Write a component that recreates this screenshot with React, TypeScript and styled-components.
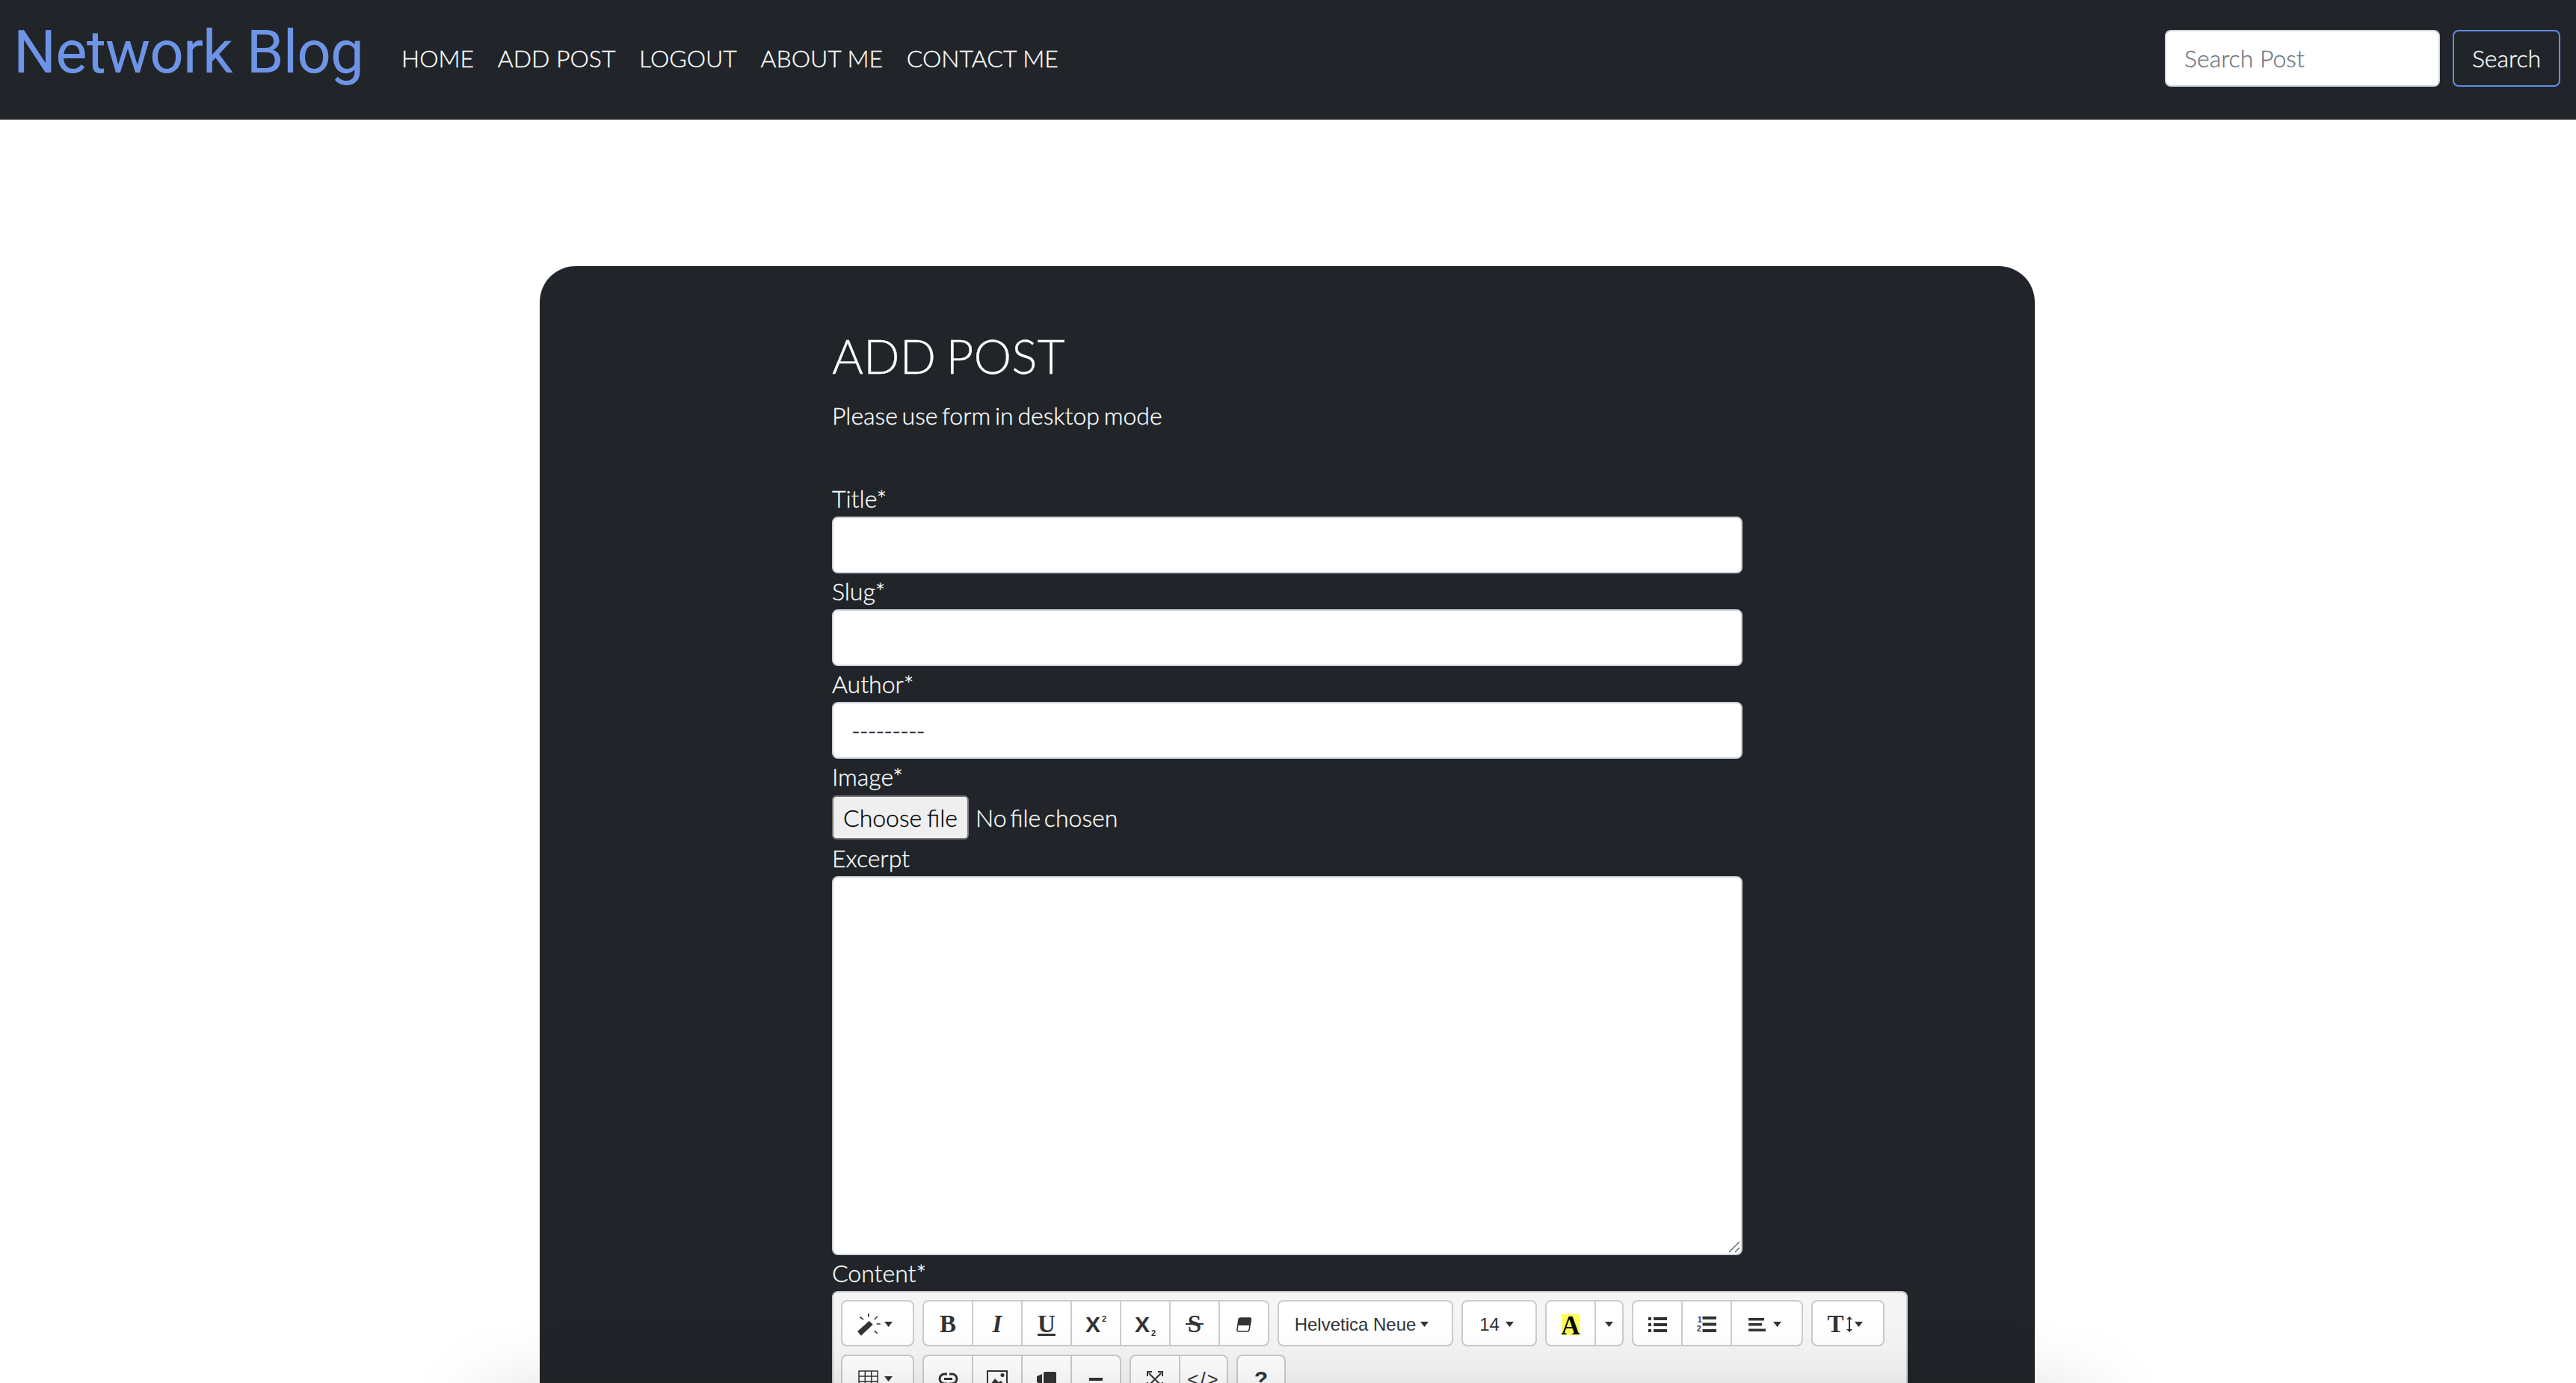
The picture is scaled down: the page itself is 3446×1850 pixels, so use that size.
import { FunctionComponent, ReactNode } from 'react';
import styled, { createGlobalStyle } from 'styled-components';

const Global = createGlobalStyle`
  html, body { margin: 0; padding: 0; background: #fff; }
  body {
    font-family: Lato, "Open Sans", sans-serif;
    font-size: 32px;
    font-weight: 300;
    line-height: 48px;
    -webkit-text-stroke: 0.3px currentColor;
  }
  * { box-sizing: border-box; }
`;

const Caret = () => (
  <svg width="11" height="7" viewBox="0 0 11 7"><path d="M0 0h11L5.500 7z" fill="#333" /></svg>
);

const Wand = () => (
  <svg width="32" height="32" viewBox="0 0 32 32" fill="#333" stroke="none">
    <path d="M1 25 16.700 11l5 4.700L6 30.700z" />
    <path
      d="M15.800 1v4.700M4.300 5.700 9 9M27.700 5l-4 4M26.700 15h5M23.700 24.300l4 3.400"
      fill="none"
      stroke="#333"
      strokeWidth="1.600"
    />
  </svg>
);

const Eraser = () => (
  <svg width="20" height="20" viewBox="0 0 20 20">
    <path d="M5 1h13q2 0 1.600 2L17 17q-.4 2-2.400 2H3q-2.500 0-2-2.500L3 3q.4-2 2-2z" fill="none" stroke="#333" strokeWidth="1.500" />
    <path d="M5 1h13q2 0 1.600 2L18 11H2.500L3 3q.4-2 2-2z" fill="#333" />
  </svg>
);

const BulletList = () => (
  <svg width="25" height="20" viewBox="0 0 25 20" fill="#333">
    <path d="M0 0h4v4H0zM0 8h4v4H0zM0 16h4v4H0zM7 0h18v4H7zM7 8h18v4H7zM7 16h18v4H7z" />
  </svg>
);

const OrderedList = () => (
  <svg width="26" height="21" viewBox="0 0 26 21" fill="#333">
    <path d="M7.500 0h18.500v4H7.500zM7.500 8.500h18.500v4H7.500zM7.500 17h18.500v4H7.500z" />
    <text x="1" y="8" fontSize="10" fontWeight="700" fontFamily="Liberation Sans">1</text>
    <text x="0" y="20" fontSize="10" fontWeight="700" fontFamily="Liberation Sans">2</text>
  </svg>
);

const AlignLines = () => (
  <svg width="23" height="18" viewBox="0 0 23 18" fill="#333">
    <path d="M0 0h21v3.500H0zM0 7h18v3.500H0zM0 14.500h23V18H0z" />
  </svg>
);

const TextHeight = () => (
  <svg width="8" height="21" viewBox="0 0 8 21" fill="#333">
    <path d="M4 0l4 4H5v13h3l-4 4-4-4h3V4H0z" />
  </svg>
);

const TableGrid = () => (
  <svg width="27" height="23" viewBox="0 0 27 23" fill="none" stroke="#333" strokeWidth="1.500">
    <path d="M1 1h25v21H1zM1 8h25M1 15h25M9.300 1v21M17.700 1v21" />
  </svg>
);

const LinkIcon = () => (
  <svg width="27" height="17" viewBox="0 0 27 17" fill="none" stroke="#333" strokeWidth="3">
    <path d="M12 2H8.500a6.500 6.500 0 0 0 0 13H12M15 2h3.500a6.500 6.500 0 0 1 0 13H15M8 8.500h11" />
  </svg>
);

const Picture = () => (
  <svg width="28" height="23" viewBox="0 0 28 23">
    <path d="M1 1h26v21H1z" fill="none" stroke="#333" strokeWidth="2" />
    <path d="M5 19l6-8 5 5 3-2 4 5z" fill="#333" />
    <circle cx="21" cy="6.500" r="2.500" fill="#333" />
  </svg>
);

const Video = () => (
  <svg width="26" height="20" viewBox="0 0 26 20" fill="#333">
    <path d="M9 2q0-2 2-2h13q2 0 2 2v16q0 2-2 2H11q-2 0-2-2zM0 6l7-3v14l-7-3z" />
  </svg>
);

const Minus = () => (
  <svg width="18" height="4" viewBox="0 0 18 4" fill="#333"><path d="M0 0h18v4H0z" /></svg>
);

const Arrows = () => (
  <svg width="22" height="22" viewBox="0 0 22 22" fill="none" stroke="#333" strokeWidth="2">
    <path d="M3 3l16 16M19 3 3 19" />
    <path d="M1 7V1h6M15 1h6v6M1 15v6h6M21 15v6h-6" />
  </svg>
);

const ToolBtn = styled.span<{ $w: number; $gap: number; $pr: number }>`
  width: ${(p) => p.$w}px;
  padding: 3px ${(p) => p.$pr}px 0 0;
  display: flex;
  align-items: center;
  justify-content: center;
  gap: ${(p) => p.$gap}px;
  color: #333;
  & + & { border-left: 2px solid #ccc; }
`;

const Group = styled.div<{ $w: number }>`
  display: flex;
  flex: none;
  width: ${(p) => p.$w}px;
  height: 62px;
  background: #fff;
  border: 2px solid #ccc;
  border-radius: 8px;
  overflow: hidden;
`;

const Glyph = styled.span<{ $italic?: boolean; $under?: boolean; $sans?: boolean }>`
  font-family: ${(p) => (p.$sans ? '"Liberation Sans", sans-serif' : '"Liberation Serif", serif')};
  font-weight: 700;
  font-size: ${(p) => (p.$sans ? 30 : 33)}px;
  line-height: 1;
  font-style: ${(p) => (p.$italic ? 'italic' : 'normal')};
  text-decoration: ${(p) => (p.$under ? 'underline' : 'none')};
  color: #333;
`;

const Struck = styled(Glyph)`
  position: relative;
  &::after {
    content: '';
    position: absolute;
    left: -3px;
    right: -3px;
    top: 15px;
    height: 2px;
    background: #333;
  }
`;

const Script = styled.span<{ $up?: boolean }>`
  position: relative;
  top: ${(p) => (p.$up ? -7 : 12)}px;
  margin-left: -2px;
  font-family: "Liberation Sans", sans-serif;
  font-weight: 700;
  font-size: 11px;
  line-height: 1;
  color: #333;
`;

const Menu = styled.span`
  font-family: "Liberation Sans", Arial, sans-serif;
  font-size: 24px;
  font-weight: 400;
  line-height: 1;
  color: #333;
`;

const CodeMark = styled(Menu)`
  font-size: 26px;
  letter-spacing: 2px;
`;

const Highlight = styled.span`
  font-family: "Liberation Serif", serif;
  font-weight: 700;
  font-size: 35px;
  line-height: 32px;
  width: 24px;
  height: 28px;
  display: flex;
  justify-content: center;
  background: #ff5;
  color: #000;
`;

const Toolbar = styled.div`
  display: flex;
  flex-direction: column;
  gap: 11px;
  width: 1439px;
  height: 260px;
  padding: 10px 10px 0;
  background: #f5f5f5;
  border: 2px solid #ccc;
  border-bottom: 0;
  border-radius: 8px 8px 0 0;
  -webkit-text-stroke: 0;
`;

const ToolRow = styled.div`
  display: flex;
  gap: 11px;
`;

const Page = styled.div`
  position: relative;
  height: 1850px;
  overflow: hidden;
`;

// soft shadow that rises from below the fold, over the card and the white page
const FoldShadow = styled.div`
  position: absolute;
  left: 650px;
  right: 650px;
  top: 1880px;
  height: 200px;
  box-shadow: 0 0 120px rgba(0, 0, 0, 0.2);
  pointer-events: none;
`;

const Navbar = styled.nav`
  height: 160px;
  display: flex;
  align-items: center;
  padding: 0 21px 0 18px;
  background: #212529;
`;

const Brand = styled.a`
  flex: none;
  width: 485px;
  margin: -20px 34px 0 0;
  font-family: Roboto, sans-serif;
  font-weight: 400;
  font-size: 80px;
  letter-spacing: -0.9px;
  line-height: 1;
  white-space: nowrap;
  color: #6d94e6;
  -webkit-text-stroke: 0;
`;

const NavLinks = styled.div`
  display: flex;
  gap: 31.6px;
  flex: 1;
  margin-top: -4px;
`;

const NavLink = styled.a`
  color: #fff;
  font-size: 32px;
`;

const SearchForm = styled.form`
  display: flex;
  gap: 17px;
  margin-top: -4px;
`;

const SearchInput = styled.div`
  width: 368px;
  height: 76px;
  padding: 0 24px;
  line-height: 72px;
  background: #fff;
  border: 2px solid #ced4da;
  border-radius: 8px;
  color: #6c757d;
`;

const SearchButton = styled.button`
  width: 144px;
  height: 76px;
  background: transparent;
  border: 2px solid #5f8ee6;
  border-radius: 8px;
  color: #fff;
  font: inherit;
`;

const Card = styled.main`
  width: 2000px;
  margin: 196px 0 0 722px;
  padding: 81px 391px 0;
  height: 1600px;
  background: #212529;
  border-radius: 48px;
  color: #fff;
`;

const Title = styled.h2`
  margin: 0 0 18px;
  font-size: 64px;
  font-weight: 300;
  line-height: 77px;
  word-spacing: -4px;
`;

const Intro = styled.p`
  margin: 0 0 63px;
  word-spacing: -3px;
`;

const Label = styled.label`
  display: block;
  height: 48px;
`;

const Field = styled.div<{ $h?: number }>`
  width: 1218px;
  height: ${(p) => p.$h || 76}px;
  padding: 0 24px;
  line-height: 72px;
  background: #fff;
  border: 2px solid #ced4da;
  border-radius: 8px;
  color: #212529;
  letter-spacing: -1px;
  position: relative;
`;

const ResizeGrip = styled.svg`
  position: absolute;
  right: 1px;
  bottom: 1px;
`;

const FileRow = styled.div`
  display: flex;
  align-items: center;
  gap: 9px;
  height: 61px;
  word-spacing: -4px;
`;

const FileButton = styled.span`
  width: 183px;
  height: 59px;
  display: flex;
  align-items: center;
  justify-content: center;
  background: #efefef;
  border: 2px solid #767676;
  border-radius: 6px;
  color: #000;
  word-spacing: -2px;
`;

const Tool: FunctionComponent<{ w: number; gap?: number; pr?: number; children: ReactNode }> = ({
  w,
  gap = 4,
  pr = 0,
  children,
}) => (
  <ToolBtn $w={w} $gap={gap} $pr={pr}>{children}</ToolBtn>
);

const App = () => (
  <Page>
    <Global />
    <Navbar>
      <Brand>Network Blog</Brand>
      <NavLinks>
        <NavLink>HOME</NavLink>
        <NavLink>ADD POST</NavLink>
        <NavLink>LOGOUT</NavLink>
        <NavLink>ABOUT ME</NavLink>
        <NavLink>CONTACT ME</NavLink>
      </NavLinks>
      <SearchForm>
        <SearchInput>Search Post</SearchInput>
        <SearchButton type="button">Search</SearchButton>
      </SearchForm>
    </Navbar>
    <Card>
      <Title>ADD POST</Title>
      <Intro>Please use form in desktop mode</Intro>
      <Label>Title*</Label>
      <Field />
      <Label>Slug*</Label>
      <Field />
      <Label>Author*</Label>
      <Field>---------</Field>
      <Label>Image*</Label>
      <FileRow>
        <FileButton>Choose file</FileButton>
        No file chosen
      </FileRow>
      <Label>Excerpt</Label>
      <Field $h={507}>
        <ResizeGrip width="16" height="16" viewBox="0 0 16 16" fill="none" stroke="#555" strokeWidth="1.200">
          <path d="M1 15 15 1M9 15l6-6" />
        </ResizeGrip>
      </Field>
      <Label>Content*</Label>
      <Toolbar>
        <ToolRow>
          <Group $w={98}>
            <Tool w={94} gap={5} pr={8}><Wand /><Caret /></Tool>
          </Group>
          <Group $w={464}>
            <Tool w={64}><Glyph>B</Glyph></Tool>
            <Tool w={66}><Glyph $italic>I</Glyph></Tool>
            <Tool w={66}><Glyph $under>U</Glyph></Tool>
            <Tool w={66}><Glyph $sans>X</Glyph><Script $up>2</Script></Tool>
            <Tool w={66}><Glyph $sans>X</Glyph><Script>2</Script></Tool>
            <Tool w={66}><Struck>S</Struck></Tool>
            <Tool w={66}><Eraser /></Tool>
          </Group>
          <Group $w={235}>
            <Tool w={231} gap={6} pr={10}><Menu>Helvetica Neue</Menu><Caret /></Tool>
          </Group>
          <Group $w={101}>
            <Tool w={97} gap={8} pr={7}><Menu>14</Menu><Caret /></Tool>
          </Group>
          <Group $w={105}>
            <Tool w={64}><Highlight>A</Highlight></Tool>
            <Tool w={37}><Caret /></Tool>
          </Group>
          <Group $w={229}>
            <Tool w={64}><BulletList /></Tool>
            <Tool w={66}><OrderedList /></Tool>
            <Tool w={95} gap={10} pr={6}><AlignLines /><Caret /></Tool>
          </Group>
          <Group $w={98}>
            <Tool w={94} gap={3} pr={8}><Glyph>T</Glyph><TextHeight /><Caret /></Tool>
          </Group>
        </ToolRow>
        <ToolRow>
          <Group $w={98}>
            <Tool w={94} gap={8} pr={7}><TableGrid /><Caret /></Tool>
          </Group>
          <Group $w={266}>
            <Tool w={64}><LinkIcon /></Tool>
            <Tool w={66}><Picture /></Tool>
            <Tool w={66}><Video /></Tool>
            <Tool w={66}><Minus /></Tool>
          </Group>
          <Group $w={132}>
            <Tool w={64}><Arrows /></Tool>
            <Tool w={64}><CodeMark>&lt;/&gt;</CodeMark></Tool>
          </Group>
          <Group $w={66}>
            <Tool w={62}><Glyph $sans>?</Glyph></Tool>
          </Group>
        </ToolRow>
      </Toolbar>
    </Card>
    <FoldShadow />
  </Page>
);

export default App;
